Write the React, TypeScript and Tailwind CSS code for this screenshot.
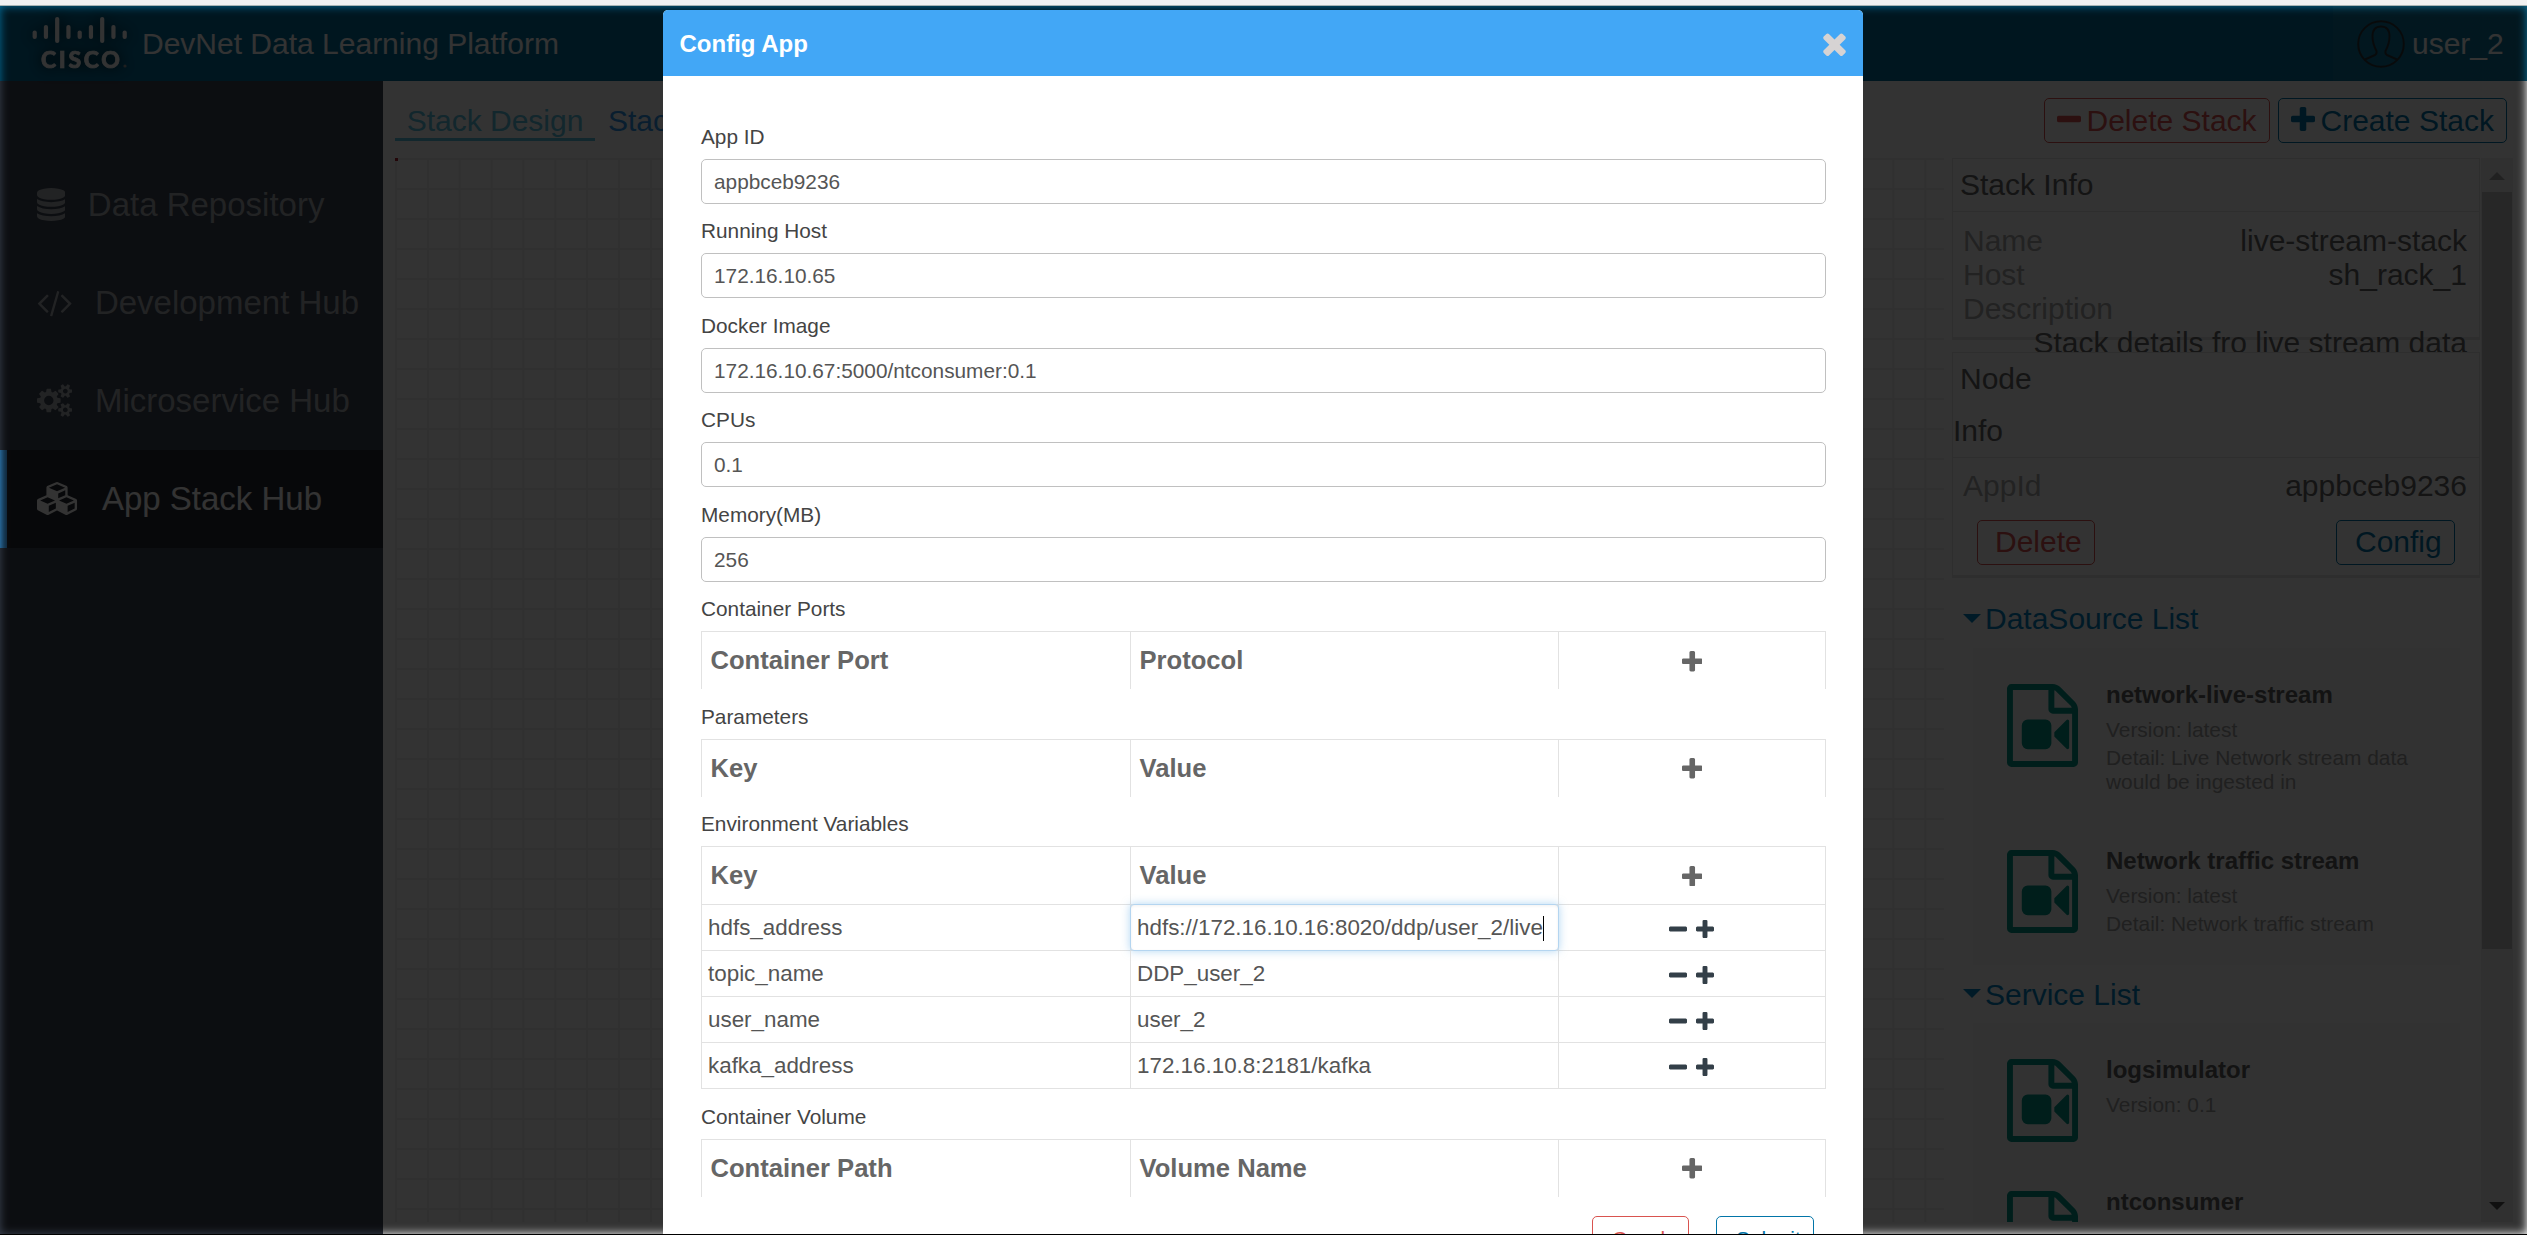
import type { ReactNode } from "react";

const PLUS =
  "M1600 736v192q0 40-28 68t-68 28h-416v416q0 40-28 68t-68 28h-192q-40 0-68-28t-28-68v-416h-416q-40 0-68-28t-28-68v-192q0-40 28-68t68-28h416v-416q0-40 28-68t68-28h192q40 0 68 28t28 68v416h416q40 0 68 28t28 68z";
const MINUS =
  "M1600 736v192q0 40-28 68t-68 28h-1216q-40 0-68-28t-28-68v-192q0-40 28-68t68-28h1216q40 0 68 28t28 68z";
const TIMES =
  "M1490 1322q0 40-28 68l-136 136q-28 28-68 28t-68-28l-294-294-294 294q-28 28-68 28t-68-28l-136-136q-28-28-28-68t28-68l294-294-294-294q-28-28-28-68t28-68l136-136q28-28 68-28t68 28l294 294 294-294q28-28 68-28t68 28l136 136q28 28 28 68t-28 68l-294 294 294 294q28 28 28 68z";
const FILE_VIDEO =
  "M1596 380q28 28 48 76t20 88v1152q0 40-28 68t-68 28h-1344q-40 0-68-28t-28-68v-1600q0-40 28-68t68-28h896q40 0 88 20t76 48zm-444-244v376h376q-10-29-22-41l-313-313q-12-12-41-22zm384 1528v-1024h-416q-40 0-68-28t-28-68v-416h-768v1536h1280zm-576-896q52 0 90 38t38 90v384q0 52-38 90t-90 38h-384q-52 0-90-38t-38-90v-384q0-52 38-90t90-38h384zm492 2q20 8 20 30v576q0 22-20 30-8 2-12 2-14 0-23-9l-265-266v-90l265-266q9-9 23-9 4 0 12 2z";
const DATABASE =
  "M896 768q237 0 443-43t325-127v170q0 69-103 128t-280 93.500-385 34.500-385-34.500-280-93.500-103-128v-170q119 84 325 127t443 43zm0 768q237 0 443-43t325-127v170q0 69-103 128t-280 93.500-385 34.500-385-34.500-280-93.500-103-128v-170q119 84 325 127t443 43zm0-384q237 0 443-43t325-127v170q0 69-103 128t-280 93.500-385 34.500-385-34.500-280-93.500-103-128v-170q119 84 325 127t443 43zm0-1152q208 0 385 34.500t280 93.500 103 128v128q0 69-103 128t-280 93.500-385 34.500-385-34.500-280-93.500-103-128v-128q0-69 103-128t280-93.500 385-34.500z";
const CODE =
  "M617 1399l-50 50q-10 10-23 10t-23-10l-466-466q-10-10-10-23t10-23l466-466q10-10 23-10t23 10l50 50q10 10 10 23t-10 23l-393 393 393 393q10 10 10 23t-10 23zm591-1067l-373 1291q-4 13-15.500 19.500t-23.500 2.500l-62-17q-13-4-19.500-15.500t-2.500-24.500l373-1291q4-13 15.500-19.500t23.500-2.500l62 17q13 4 19.500 15.500t2.500 24.500zm657 651l-466 466q-10 10-23 10t-23-10l-50-50q-10-10-10-23t10-23l393-393-393-393q-10-10-10-23t10-23l50-50q10-10 23-10t23 10l466 466q10 10 10 23t-10 23z";
const COGS =
  "M896 896q0-106-75-181t-181-75-181 75-75 181 75 181 181 75 181-75 75-181zm768 512q0-52-38-90t-90-38-90 38-38 90q0 53 37.500 90.500t90.500 37.500 90.500-37.500 37.500-90.500zm0-1024q0-52-38-90t-90-38-90 38-38 90q0 53 37.500 90.500t90.500 37.500 90.500-37.500 37.500-90.500zm-384 421v185q0 10-7 19.500t-16 10.500l-155 24q-11 35-32 76 34 48 90 115 7 11 7 20 0 12-7 19-23 30-82.500 89.500t-78.500 59.500q-11 0-21-7l-115-90q-37 19-77 31-11 108-23 155-7 24-30 24h-186q-11 0-20-7.500t-10-17.500l-23-153q-34-10-75-31l-118 89q-7 7-20 7-11 0-21-8-144-133-144-160 0-9 7-19 10-14 41-53t47-61q-23-44-35-82l-152-24q-10-1-17-9.500t-7-19.500v-185q0-10 7-19.500t16-10.500l155-24q11-35 32-76-34-48-90-115-7-11-7-20 0-12 7-20 22-30 82-89t79-59q11 0 21 7l115 90q34-18 77-32 11-108 23-154 7-24 30-24h186q11 0 20 7.500t10 17.500l23 153q34 10 75 31l118-89q8-7 20-7 11 0 21 8 144 133 144 160 0 8-7 19-12 16-42 54t-45 60q23 48 34 82l152 23q10 2 17 10.500t7 19.500zm640 533v140q0 16-149 31-12 27-30 52 51 113 51 138 0 4-4 7-122 71-124 71-8 0-46-47t-52-68q-20 2-30 2t-30-2q-14 21-52 68t-46 47q-2 0-124-71-4-3-4-7 0-25 51-138-18-25-30-52-149-15-149-31v-140q0-16 149-31 13-29 30-52-51-113-51-138 0-4 4-7 4-2 35-20t59-34 30-16q8 0 46 46.500t52 67.500q20-2 30-2t30 2q51-71 92-112l6-2q4 0 124 70 4 3 4 7 0 25-51 138 17 23 30 52 149 15 149 31zm0-1024v140q0 16-149 31-12 27-30 52 51 113 51 138 0 4-4 7-122 71-124 71-8 0-46-47t-52-68q-20 2-30 2t-30-2q-14 21-52 68t-46 47q-2 0-124-71-4-3-4-7 0-25 51-138-18-25-30-52-149-15-149-31v-140q0-16 149-31 13-29 30-52-51-113-51-138 0-4 4-7 4-2 35-20t59-34 30-16q8 0 46 46.500t52 67.500q20-2 30-2t30 2q51-71 92-112l6-2q4 0 124 70 4 3 4 7 0 25-51 138 17 23 30 52 149 15 149 31z";
const CUBES =
  "M640 1632l384-192v-314l-384 164v342zm-64-454l404-173-404-173-404 173zm1088 454l384-192v-314l-384 164v342zm-64-454l404-173-404-173-404 173zm-448-293l384-165v-266l-384 164v267zm-64-379l441-189-441-189-441 189zm1088 518v416q0 36-19 67t-52 47l-448 224q-25 14-57 14t-57-14l-448-224q-4-2-7-4-2 2-7 4l-448 224q-25 14-57 14t-57-14l-448-224q-33-16-52-47t-19-67v-416q0-38 21.500-70t56.500-48l434-186v-400q0-38 21.500-70t56.500-48l448-192q23-10 50-10t50 10l448 192q35 16 56.500 48t21.500 70v400l434 186q36 16 57 48t21 70z";

function Glyph({ d, box, className }: { d: string; box: string; className: string }) {
  return (
    <svg viewBox={box} fill="currentColor" className={`block shrink-0 ${className}`} aria-hidden="true">
      <path d={d} />
    </svg>
  );
}

const Plus = ({ className }: { className: string }) => <Glyph d={PLUS} box="192 128 1408 1408" className={className} />;
const Minus = ({ className }: { className: string }) => <Glyph d={MINUS} box="192 128 1408 1408" className={className} />;

const logoBars = [
  [30.5, 39],
  [25, 39],
  [17, 43],
  [25, 39],
  [30.5, 39],
  [25, 39],
  [17, 43],
  [25, 39],
  [30.5, 39],
];

function CiscoLogo() {
  return (
    <svg viewBox="30 6 102 75" className="ml-[30px] h-[75px] w-[102px] shrink-0 drop-shadow-[0_0_7px_#000]">
      {logoBars.map(([top, bottom], i) => (
        <rect key={i} x={32.6 + i * 11.25} y={top} width={4.2} height={bottom - top} rx={2.1} fill="#fff" />
      ))}
      <text
        x="41"
        y="67.500"
        fill="#fff"
        stroke="#fff"
        strokeWidth="0.700"
        textLength="79"
        fontFamily="Lato, sans-serif"
        fontWeight="900"
        fontSize="23"
      >
        CISCO
      </text>
      <circle cx="125" cy="66" r="1.600" fill="#999" />
    </svg>
  );
}

function Header() {
  return (
    <header className="flex h-[75px] shrink-0 bg-[#046e9b] text-[30px] leading-[75px] text-white">
      <CiscoLogo />
      <span className="ml-[10px] flex-1">DevNet Data Learning Platform</span>
      <div className="flex w-[194px] items-center bg-[#0d749d]">
        <svg viewBox="0 0 48 48" className="ml-6 size-[48px]" fill="none" stroke="#2b363b" strokeWidth="2">
          <circle cx="24" cy="24" r="22.800" />
          <path d="M8 39.500l10-4.500q2-1 1.500-4-4-7.500-4-14.500 0-10 8.500-10t8.500 10q0 7-4 14.500-.5 3 1.500 4l10 4.500" />
        </svg>
        <span className="ml-[7px]">user_2</span>
      </div>
    </header>
  );
}

const nav = [
  { label: "Data Repository", d: DATABASE, box: "128 0 1536 1792", size: "w-[28.300px] h-[33px]", active: false },
  { label: "Development Hub", d: CODE, box: "0 0 1920 1792", size: "w-[35.400px] h-[33px]", active: false },
  { label: "Microservice Hub", d: COGS, box: "0 0 1920 1792", size: "w-[35.400px] h-[33px]", active: false },
  { label: "App Stack Hub", d: CUBES, box: "0 0 2304 1792", size: "w-[42.400px] h-[33px]", active: true },
];

function Sidebar() {
  return (
    <nav className="w-[383px] shrink-0 bg-[#3d4554] pt-[74.500px] text-[33px]">
      {nav.map((n) => (
        <div
          key={n.label}
          className={
            n.active
              ? "flex h-[98px] items-center gap-[22.500px] border-l-[7px] border-[#40a8f7] bg-[#272b33] pl-[30px] text-white"
              : "flex h-[98px] items-center gap-[22.500px] pl-[37px] text-[#aaadb5]"
          }
        >
          <Glyph d={n.d} box={n.box} className={n.size} />
          <span>{n.label}</span>
        </div>
      ))}
    </nav>
  );
}

const redBtn = "flex h-[45px] items-center rounded-[5px] border-[1.500px] border-[#d9534f] text-[#d9534f]";
const blueBtn = "flex h-[45px] items-center rounded-[5px] border-[1.500px] border-[#0275a8] text-[#0275a8]";

function Toolbar() {
  return (
    <div className="flex h-[77px] shrink-0 items-start pt-[17px] pr-[20px] pl-3 text-[30px]">
      <div className="h-[43px] w-[200px] border-b-[3px] border-[#5bc0de] text-center leading-[45px] text-[#5bc0de]">
        Stack Design
      </div>
      <div className="flex-1 pl-[13px] leading-[45px] text-[#2e96ea]">Stack</div>
      <div className={`${redBtn} w-[226px] gap-[5.500px] pl-3`}>
        <Minus className="-mt-[3px] size-[24px]" />
        Delete Stack
      </div>
      <div className={`${blueBtn} ml-2 w-[229px] gap-[5.500px] pl-3`}>
        <Plus className="-mt-[3px] size-[24px]" />
        Create Stack
      </div>
    </div>
  );
}

function InfoRow({ label, value }: { label: string; value: string }) {
  return (
    <div className="flex h-[34px] justify-between leading-[34px]">
      <span className="text-[#aaa]">{label}</span>
      <span>{value}</span>
    </div>
  );
}

function ListTitle({ children, className }: { children: ReactNode; className: string }) {
  return (
    <div className={`flex items-center pl-[11px] text-[#0384c4] ${className}`}>
      <div className="mr-[4px] mb-[1px] size-0 border-x-[9px] border-t-[9px] border-x-transparent border-t-current" />
      {children}
    </div>
  );
}

function ListItem({
  name,
  version,
  detail,
  className,
}: {
  name: string;
  version?: string;
  detail?: string;
  className: string;
}) {
  return (
    <div className={`flex shrink-0 pl-[34px] ${className}`}>
      <Glyph d={FILE_VIDEO} box="128 0 1536 1792" className="h-[83px] w-[71px] text-[#009688]" />
      <div className="ml-[28px] w-[320px] text-[20.900px] leading-[24px] text-[#a0a0a0]">
        <div className="text-[24px] leading-[22px] font-bold text-[#606060]">{name}</div>
        {version && <div className="mt-[12px]">Version: {version}</div>}
        {detail && <div className="mt-[4px]">Detail: {detail}</div>}
      </div>
    </div>
  );
}

function InfoColumn() {
  return (
    <aside className="flex h-[1064px] w-[528px] shrink-0 flex-col overflow-hidden text-[30px] text-[#666]">
      <section className="h-[182px] shrink-0 border border-b-[3px] border-[#e4e4e4]">
        <div className="h-[53px] border-b border-[#e4e4e4] pl-[7px] leading-[52px]">Stack Info</div>
        <div className="pt-[12px] pr-[12px] pl-[10px]">
          <InfoRow label="Name" value="live-stream-stack" />
          <InfoRow label="Host" value="sh_rack_1" />
          <InfoRow label="Description" value="" />
          <div className="text-right leading-[34px]">Stack details fro live stream data</div>
        </div>
      </section>
      <section className="mt-[12px] h-[226px] shrink-0 border border-b-[3px] border-[#e4e4e4]">
        <div className="h-[105px] border-b border-[#e4e4e4] leading-[52px]">
          <div className="pl-[7px]">Node</div>
          <div>Info</div>
        </div>
        <div className="pt-[11px] pr-[12px] pl-[10px]">
          <InfoRow label="AppId" value="appbceb9236" />
          <div className="mt-[17px] flex justify-between pr-[12px] pl-[14px]">
            <div className={`${redBtn} w-[118px] pb-[2px] pl-[17px]`}>Delete</div>
            <div className={`${blueBtn} w-[119px] pb-[2px] pl-[18px]`}>Config</div>
          </div>
        </div>
      </section>
      <ListTitle className="mt-[11px] h-[59px] shrink-0">DataSource List</ListTitle>
      <section className="mr-[20px] ml-[21px] h-[317px] shrink-0 bg-[#f9f9f9] pt-[36px]">
        <ListItem
          name="network-live-stream"
          version="latest"
          detail="Live Network stream data would be ingested in"
          className="h-[166px]"
        />
        <ListItem name="Network traffic stream" version="latest" detail="Network traffic stream" className="h-[110px]" />
      </section>
      <ListTitle className="h-[58px] shrink-0">Service List</ListTitle>
      <section className="mr-[20px] ml-[21px] shrink-0 bg-[#f9f9f9] pt-[36px]">
        <ListItem name="logsimulator" version="0.1" className="h-[132px]" />
        <ListItem name="ntconsumer" className="h-[132px]" />
      </section>
    </aside>
  );
}

function Scrollbar() {
  return (
    <div className="flex h-[1064px] w-[32px] shrink-0 flex-col items-center bg-[#f1f1f1]">
      <div className="mt-[14px] mb-[12px] size-0 border-x-[8px] border-b-[8px] border-x-transparent border-b-[#a3a3a3]" />
      <div className="h-[757px] w-[30px] bg-[#c4c4c4]" />
      <div className="mt-auto mb-[12px] size-0 border-x-[8px] border-t-[8px] border-x-transparent border-t-[#505050]" />
    </div>
  );
}

const cols = "grid grid-cols-[429px_428px_1fr]";

function Label({ children }: { children: ReactNode }) {
  return <div className="pt-[4.400px] text-[20.800px] leading-[45px] text-[#444]">{children}</div>;
}

function Field({ label, value }: { label: string; value: string }) {
  return (
    <div>
      <Label>{label}</Label>
      <div className="h-[45px] rounded-[5px] border border-[#c0c0c0] pl-3 text-[20.800px] leading-[44px] text-[#555]">
        {value}
      </div>
    </div>
  );
}

function GridTable({ head, rows = [] }: { head: [string, string]; rows?: [string, string][] }) {
  return (
    <div className={`border-t border-r border-[#e2e2e2] ${rows.length ? "border-b" : ""}`}>
      <div className={`${cols} h-[57px] text-[25.600px] leading-[57px] font-bold text-[#666]`}>
        <div className="border-l border-[#e2e2e2] pl-[8.500px]">{head[0]}</div>
        <div className="border-l border-[#e2e2e2] pl-[8.500px]">{head[1]}</div>
        <div className="flex items-center justify-center border-l border-[#e2e2e2]">
          <Plus className="mt-[1px] size-[20.500px]" />
        </div>
      </div>
      {rows.map(([key, value], i) => (
        <div key={key} className={`${cols} h-[46px] border-t border-[#e2e2e2] text-[22.400px] leading-[45px] text-[#555]`}>
          <div className="border-l border-[#e2e2e2] pl-[6px]">{key}</div>
          <div className="relative border-l border-[#e2e2e2] pl-[6px]">
            {i === 0 && (
              <div className="absolute -inset-px rounded-[4px] border border-[#b4d5f0] shadow-[0_0_9px_rgba(102,175,233,0.5),inset_0_1px_3px_rgba(0,0,0,0.06)]" />
            )}
            {value}
            {i === 0 && <span className="inline-block h-[25px] w-px bg-black align-[-6px]" />}
          </div>
          <div className="flex items-center justify-center gap-[9px] border-l border-[#e2e2e2] pt-[3px] pr-[1px] text-[#333f48]">
            <Minus className="size-[18px]" />
            <Plus className="size-[18px]" />
          </div>
        </div>
      ))}
    </div>
  );
}

function ConfigModal() {
  return (
    <div className="absolute top-[4px] left-[663px] h-[1300px] w-[1200px] overflow-hidden rounded-[5px] bg-white">
      <div className="flex h-[66px] items-center justify-between bg-[#42a7f6] pr-[17px] pl-[16.500px] text-[24px] font-bold text-white">
        <span className="pt-[1px]">Config App</span>
        <Glyph d={TIMES} box="302 238 1188 1316" className="h-[25px] w-[23px] text-[#d6d3d3]" />
      </div>
      <div className="pt-[33.600px] pr-[37px] pl-[38px]">
        <Field label="App ID" value="appbceb9236" />
        <Field label="Running Host" value="172.16.10.65" />
        <Field label="Docker Image" value="172.16.10.67:5000/ntconsumer:0.1" />
        <Field label="CPUs" value="0.1" />
        <Field label="Memory(MB)" value="256" />
        <div className="pt-[0.400px]">
          <Label>Container Ports</Label>
          <GridTable head={["Container Port", "Protocol"]} />
          <Label>Parameters</Label>
          <GridTable head={["Key", "Value"]} />
          <Label>Environment Variables</Label>
          <GridTable
            head={["Key", "Value"]}
            rows={[
              ["hdfs_address", "hdfs://172.16.10.16:8020/ddp/user_2/live"],
              ["topic_name", "DDP_user_2"],
              ["user_name", "user_2"],
              ["kafka_address", "172.16.10.8:2181/kafka"],
            ]}
          />
          <Label>Container Volume</Label>
          <GridTable head={["Container Path", "Volume Name"]} />
        </div>
        <div className="mt-[19.500px] flex justify-end gap-[27px] pr-[12px] text-[20.800px]">
          <div className={`${redBtn} w-[97px] pl-[19px]`}>Cancle</div>
          <div className={`${blueBtn} w-[98px] pl-[19px]`}>Submit</div>
        </div>
      </div>
    </div>
  );
}

export default function App() {
  return (
    <div className="flex h-[1235px] w-[2527px] flex-col overflow-hidden bg-black font-['Liberation_Sans',Arial,sans-serif]">
      <div className="h-[6px] shrink-0 border-b border-[#a9b4b4] bg-[#f1f1f1]" />
      <div className="relative flex h-[1228px] shrink-0 flex-col overflow-hidden bg-white">
        <Header />
        <div className="flex min-h-0 flex-1">
          <Sidebar />
          <main className="flex min-w-0 flex-1 flex-col">
            <Toolbar />
            <div className="flex">
              <div className="mr-[8px] ml-[12px] h-[1064px] w-[1549px] shrink-0 bg-[linear-gradient(to_right,#efefef_2px,transparent_2px),linear-gradient(to_bottom,#efefef_2px,transparent_2px)] bg-[size:31.870px_30px]">
                <div className="size-[3px] bg-[#b02030]" />
              </div>
              <InfoColumn />
              <div className="w-px shrink-0" />
              <Scrollbar />
            </div>
          </main>
        </div>
        <div className="absolute inset-0 bg-black/80 blur-[5px]" />
        <ConfigModal />
      </div>
      <div className="h-px shrink-0 bg-black" />
    </div>
  );
}
